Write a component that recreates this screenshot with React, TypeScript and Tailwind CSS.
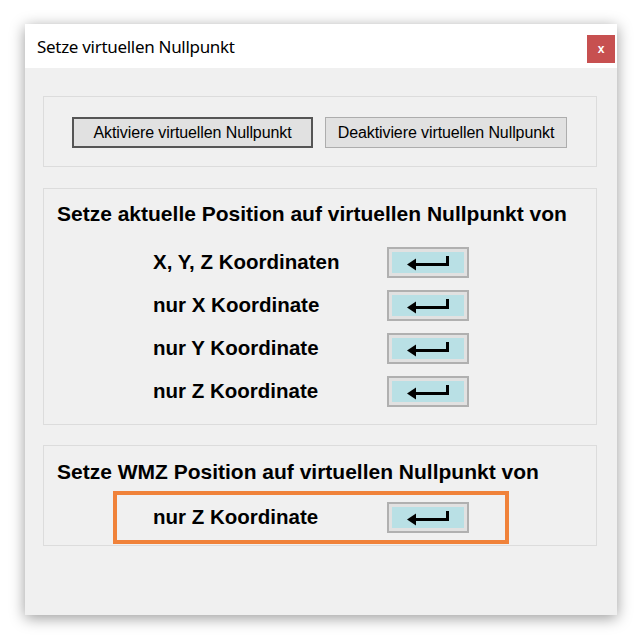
import React from 'react';

const rows = ['X, Y, Z Koordinaten', 'nur X Koordinate', 'nur Y Koordinate', 'nur Z Koordinate'];

function EnterIcon() {
  return (
    <svg width="44" height="18" viewBox="0 0 44 18">
      <path d="M1 10.5 L10 4.5 L10 16.5 Z" fill="#000" />
      <path d="M9 10.5 H41.5 V2" fill="none" stroke="#000" strokeWidth="3" />
    </svg>
  );
}

function EnterButton() {
  return (
    <button className="w-[82px] h-[31px] border-2 border-[#b0b0b0] bg-[#e1e1e1] p-[3px] flex">
      <span className="flex-1 bg-[#b9e0e5] flex items-center justify-center">
        <EnterIcon />
      </span>
    </button>
  );
}

function Row({ label }: { label: string }) {
  return (
    <div className="flex items-center h-[31px]">
      <span className="w-[234px] text-[20.5px] font-bold text-black leading-none">{label}</span>
      <EnterButton />
    </div>
  );
}

export default function App() {
  return (
    <div className="w-[642px] h-[640px] bg-white pt-[24px] pl-[25px]" style={{ fontFamily: '"Liberation Sans", Arial, sans-serif' }}>
      <div className="w-[592px] h-[591px] bg-[#f0f0f0] flex flex-col shadow-[0_3px_14px_rgba(0,0,0,0.4)]">
        {/* title bar */}
        <div className="h-[44px] bg-white flex items-start justify-between pl-[12px] pr-[2px]">
          <span className="mt-[11px] text-[17px] text-black tracking-[-0.3px] leading-[24px]" style={{ fontFamily: '"Noto Sans", "Open Sans", sans-serif' }}>
            Setze virtuellen Nullpunkt
          </span>
          <button className="mt-[11px] w-[28px] h-[28px] bg-[#c75050] text-white text-[12px] font-bold flex items-center justify-center leading-none">
            x
          </button>
        </div>

        <div className="flex flex-col pl-[18px] pr-[20px] pt-[28px]">
          {/* group 1 */}
          <div className="h-[71px] border border-[#dcdcdc] flex items-start gap-[12px] pl-[28px] pt-[20px]">
            <button className="w-[241px] h-[31px] border-2 border-[#555555] bg-[#e1e1e1] text-[16px] text-black tracking-[-0.1px] leading-none">
              Aktiviere virtuellen Nullpunkt
            </button>
            <button className="w-[242px] h-[31px] border border-[#adadad] bg-[#e1e1e1] text-[16px] text-black tracking-[-0.1px] leading-none">
              Deaktiviere virtuellen Nullpunkt
            </button>
          </div>

          {/* group 2 */}
          <div className="mt-[21px] h-[237px] border border-[#dcdcdc] flex flex-col pl-[13px] pt-[13px]">
            <div className="text-[21px] font-bold text-black leading-[24px]">
              Setze aktuelle Position auf virtuellen Nullpunkt von
            </div>
            <div className="mt-[21px] pl-[96px] flex flex-col gap-[12px]">
              {rows.map((r) => (
                <Row key={r} label={r} />
              ))}
            </div>
          </div>

          {/* group 3 */}
          <div className="mt-[20px] h-[101px] border border-[#dcdcdc] flex flex-col pl-[13px] pt-[14px]">
            <div className="text-[21px] font-bold text-black leading-[24px]">
              Setze WMZ Position auf virtuellen Nullpunkt von
            </div>
            <div className="mt-[7px] ml-[56px] w-[396px] h-[53px] border-4 border-[#f0823a] pl-[36px] pt-[7px]">
              <Row label="nur Z Koordinate" />
            </div>
          </div>
        </div>
      </div>
    </div>
  );
}
